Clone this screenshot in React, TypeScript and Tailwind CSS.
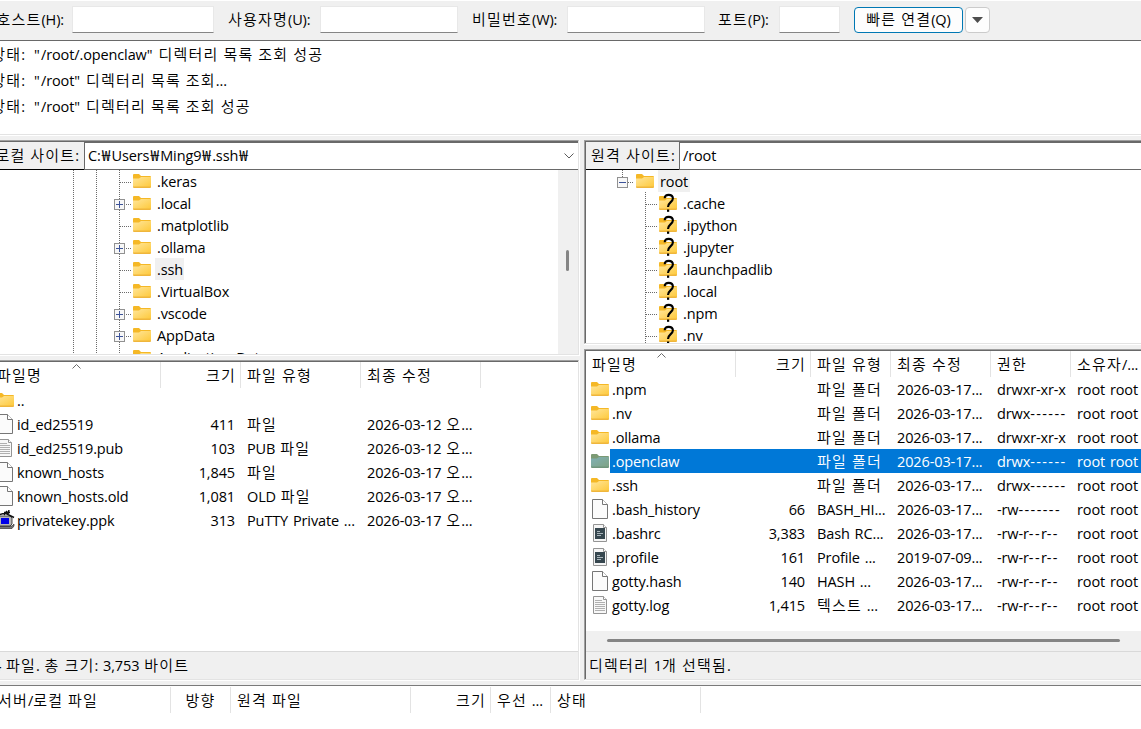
import React from "react";

/* Splits a string so each kind of run can carry its own tracking. */
function T({ s, className = "" }: { s: string; className?: string }) {
  const runs = s.match(/[\uac00-\ud7a3]+|-{2,}|["₩]+|[^\uac00-\ud7a3"₩-]+|-/g) ?? [];
  return (
    <span className={"whitespace-pre [word-spacing:1.2px] " + className}>
      {runs.map((r, i) => {
        let c = "tracking-[-0.12px]";
        if (/[\uac00-\ud7a3]/.test(r)) c = "text-[15px] leading-[0] font-[350] tracking-[1.2px]";
        else if (r.startsWith("--")) c = "tracking-[1.4px]";
        else if (r.startsWith('"')) c = "tracking-[1.2px]";
        else if (r.startsWith("₩")) c = "ml-[1px] text-[15.5px] leading-[0] tracking-[1.2px]";
        return <span key={i} className={c}>{r}</span>;
      })}
    </span>
  );
}

function FolderShape({ x = 0, y = 0, selected = false }: { x?: number; y?: number; selected?: boolean }) {
  const tab = selected ? "#7c9a74" : "#f5b826";
  return (
    <g transform={`translate(${x} ${y})`}>
      <path d="M0 1Q0 0 1 0H6L8 2H17Q18 2 18 3V6H0Z" fill={tab} />
      <path d="M0 4.5H6L8 3H18V13H0Z" fill={selected ? "url(#fs)" : "url(#fy)"} />
      <path d="M0 12.5H18V13Q18 14 17 14H1Q0 14 0 13Z" fill={selected ? "#6f957c" : "#efb63c"} />
    </g>
  );
}

type Kind = "folder" | "sel" | "blank" | "text" | "shell" | "putty";

function FileIcon({ kind }: { kind: Kind }) {
  return (
    <svg width="20" height="20" viewBox="0 0 20 20" className="shrink-0">
      {kind === "folder" && <FolderShape x={1} y={3} />}
      {kind === "sel" && <FolderShape x={1} y={3} selected />}
      {kind === "blank" && (
        <>
          <path d="M2.5 .5H12.5L17.5 5.5V19.5H2.5Z" fill="#fbfbfb" stroke="#767676" />
          <path d="M12.5 .5V5.5H17.5" fill="#fff" stroke="#767676" />
        </>
      )}
      {kind === "text" && (
        <>
          <path d="M3.5 1.5H13.5L16.5 4.5V18.5H3.5Z" fill="#f8f8f8" stroke="#949494" />
          <path d="M13.5 1.5V4.5H16.5" fill="#fff" stroke="#949494" />
          <path d="M5 5.5H12M5 7.5H15M5 9.5H15M5 11.5H15M5 13.5H15M5 15.5H15" stroke="#b0b0b0" />
        </>
      )}
      {kind === "shell" && (
        <>
          <path d="M3.5 1.5H13.5L16.5 4.5V18.5H3.5Z" fill="#f5f5f5" stroke="#949494" />
          <path d="M13.5 1.5V4.5H16.5" fill="#fff" stroke="#949494" />
          <path d="M5 5H15V16H5Z" fill="#36474f" />
          <path d="M7 8.5H10M7 10.5H13M7 12.5H11" stroke="#aab6bc" />
        </>
      )}
      {kind === "putty" && (
        <>
          <path d="M2 16H17L19 14V16L17 18.5H2Z" fill="#777" stroke="#222" strokeWidth=".6" />
          <path d="M3 6H15L17 8V14L15 16H3Z" fill="#b5b5b5" stroke="#222" strokeWidth=".8" />
          <path d="M6 8H14V14H6Z" fill="#0000e8" />
          <path d="M3 5L10 3L19 7.5M9 5L12 1M13 4L14 0M9 2.5H15" fill="none" stroke="#111" strokeWidth="1.5" />
        </>
      )}
    </svg>
  );
}

function Box({ x, plus }: { x: number; plus: boolean }) {
  return (
    <g shapeRendering="crispEdges">
      <rect x={x + 0.5} y="7.5" width="10" height="10" fill="#f7f7f7" stroke="#919191" />
      <path d={`M${x + 2} 12.5H${x + 9}`} stroke="#3c5399" />
      {plus && <path d={`M${x + 5.5} 9V16`} stroke="#3c5399" />}
    </g>
  );
}

function LocalRow({ name, plus, sel }: { name: string; plus?: boolean; sel?: boolean }) {
  return (
    <div className="flex h-[22px] shrink-0 items-center">
      <svg width="155" height="22" className="shrink-0">
        <g stroke="#6b6b6b" strokeDasharray="1 1" shapeRendering="crispEdges">
          <path d="M73.5 0V22M96.5 0V22M119.5 0V22M120 12.5H132" />
        </g>
        {plus && <Box x={114} plus />}
        <FolderShape x={133} y={4} />
      </svg>
      <T s={name} className={"flex h-[22px] items-center pt-[2px] pl-[2px] pr-[1px] " + (sel ? "bg-[#f0f0f0]" : "")} />
    </div>
  );
}

function RemoteRow({ name }: { name: string }) {
  return (
    <div className="flex h-[22px] shrink-0 items-center">
      <svg width="97" height="22" className="shrink-0">
        <path d="M59.5 0V22M60 12.5H72" stroke="#6b6b6b" strokeDasharray="1 1" shapeRendering="crispEdges" />
        <FolderShape x={73} y={4} />
        <path d="M78.7 6.2C78.7 3.6 80.3 2.9 82.7 2.9C85.3 2.9 86.9 4.2 86.9 6.6C86.9 9.9 81.9 10.6 82 15" fill="none" stroke="#000" strokeWidth="2.1" />
        <rect x="81" y="17.5" width="2.2" height="2.3" fill="#000" />
      </svg>
      <T s={name} className="pt-[2px]" />
    </div>
  );
}

function Cell({ w, s, right, head }: { w: string; s: string; right?: boolean; head?: boolean }) {
  return (
    <div
      className={
        "flex h-full shrink-0 items-center overflow-hidden pt-[2px] " + w +
        (right ? (head ? " justify-end pr-[4px]" : " justify-end pr-[6px]") : " pl-[6px]") +
        (head ? " border-r border-[#e3e3e3]" : "")
      }
    >
      <T s={s} />
    </div>
  );
}

function Input({ w }: { w: string }) {
  return <div className={"h-[27px] shrink-0 border border-[#e8e8e8] border-b-[#868686] bg-white " + w} />;
}

const localFiles: [Kind, string, string, string, string][] = [
  ["folder", "..", "", "", ""],
  ["blank", "id_ed25519", "411", "파일", "2026-03-12 오..."],
  ["text", "id_ed25519.pub", "103", "PUB 파일", "2026-03-12 오..."],
  ["blank", "known_hosts", "1,845", "파일", "2026-03-17 오..."],
  ["blank", "known_hosts.old", "1,081", "OLD 파일", "2026-03-17 오..."],
  ["putty", "privatekey.ppk", "313", "PuTTY Private ...", "2026-03-17 오..."],
];

const remoteFiles: [Kind, string, string, string, string, string][] = [
  ["folder", ".npm", "", "파일 폴더", "2026-03-17...", "drwxr-xr-x"],
  ["folder", ".nv", "", "파일 폴더", "2026-03-17...", "drwx------"],
  ["folder", ".ollama", "", "파일 폴더", "2026-03-17...", "drwxr-xr-x"],
  ["sel", ".openclaw", "", "파일 폴더", "2026-03-17...", "drwx------"],
  ["folder", ".ssh", "", "파일 폴더", "2026-03-17...", "drwx------"],
  ["blank", ".bash_history", "66", "BASH_HI...", "2026-03-17...", "-rw-------"],
  ["shell", ".bashrc", "3,383", "Bash RC...", "2026-03-17...", "-rw-r--r--"],
  ["shell", ".profile", "161", "Profile ...", "2019-07-09...", "-rw-r--r--"],
  ["blank", "gotty.hash", "140", "HASH ...", "2026-03-17...", "-rw-r--r--"],
  ["text", "gotty.log", "1,415", "텍스트 ...", "2026-03-17...", "-rw-r--r--"],
];

function SortMark() {
  return (
    <svg width="9" height="5" className="absolute top-[2px]">
      <path d="M.5 4.5L4.5 .5L8.5 4.5" fill="none" stroke="#6b6b6b" />
    </svg>
  );
}

function LocalPane() {
  return (
    <div className="flex w-[580px] shrink-0 flex-col">
      <div className="flex h-[216px] flex-col border-r border-b border-white">
        <div className="flex h-[215px] flex-col border-t border-r border-b border-t-[#a0a0a0] border-r-[#e3e3e3] border-b-[#e3e3e3] bg-white">
          <div className="h-px bg-[#696969]" />
          <div className="flex h-[28px] shrink-0">
            <div className="flex w-[84px] items-center justify-end overflow-hidden border-b border-black bg-[#f0f0f0] pr-[5px]">
              <T s="로컬 사이트:" />
            </div>
            <div className="flex flex-1 items-center border border-t-[1px] border-r-0 border-[#696969] pl-[3px] pr-[4px]">
              <T s="C:₩Users₩Ming9₩.ssh₩" className="flex-1" />
              <svg width="10" height="6">
                <path d="M.5 .5L5 5L9.5 .5" fill="none" stroke="#5c5c5c" />
              </svg>
            </div>
          </div>
          <div className="flex min-h-0 flex-1">
            <div className="min-w-0 flex-1 overflow-hidden">
              <LocalRow name=".keras" />
              <LocalRow name=".local" plus />
              <LocalRow name=".matplotlib" />
              <LocalRow name=".ollama" plus />
              <LocalRow name=".ssh" sel />
              <LocalRow name=".VirtualBox" />
              <LocalRow name=".vscode" plus />
              <LocalRow name="AppData" plus />
              <LocalRow name="Application Data" />
            </div>
            <div className="w-[20px] bg-[#f0f0f0] pl-[8px] pt-[80px]">
              <div className="h-[21px] w-[3px] rounded-full bg-[#858585]" />
            </div>
          </div>
        </div>
      </div>
      <div className="mt-[4px] flex h-[321px] flex-col border-r border-b border-white">
        <div className="flex h-[320px] flex-col border-t border-r border-b border-t-[#a0a0a0] border-r-[#e3e3e3] border-b-[#e3e3e3] bg-white">
          <div className="h-px shrink-0 bg-[#696969]" />
          <div className="relative flex h-[26px] shrink-0">
            <div className="flex w-[161px] items-center border-r border-[#e3e3e3] pt-[2px]">
              <T s="파일명" className="-ml-[3px]" />
            </div>
            <div className="absolute left-[72px] top-0"><SortMark /></div>
            <Cell head w="w-[80px]" s="크기" right />
            <Cell head w="w-[120px]" s="파일 유형" />
            <Cell head w="w-[120px]" s="최종 수정" />
          </div>
          <div className="flex-1">
            {localFiles.map((f) => (
              <div key={f[1]} className="flex h-[24px] items-center">
                <div className="flex w-[161px] items-center">
                  <div className="-ml-[5px] mr-[2px] flex"><FileIcon kind={f[0]} /></div>
                  <T s={f[1]} className="pt-[2px]" />
                </div>
                <Cell w="w-[80px]" s={f[2]} right />
                <Cell w="w-[120px]" s={f[3]} />
                <Cell w="w-[120px]" s={f[4]} />
              </div>
            ))}
          </div>
          <div className="flex h-[28px] items-center overflow-hidden border-t border-[#d9d9d9] bg-[#f0f0f0]">
            <T s="4 파일. 총 크기: 3,753 바이트" className="-ml-[7px]" />
          </div>
        </div>
      </div>
    </div>
  );
}

function RemotePane() {
  return (
    <div className="flex w-[557px] shrink-0 flex-col">
      <div className="flex h-[205px] flex-col border-b border-white">
        <div className="flex h-[204px] flex-col border-t border-l border-b border-t-[#a0a0a0] border-l-[#a0a0a0] border-b-[#e3e3e3]">
          <div className="flex min-h-0 flex-1 flex-col border-t border-l border-[#696969] bg-white">
            <div className="flex h-[28px] shrink-0">
              <div className="flex w-[93px] items-center border-b border-black bg-[#f0f0f0] pl-[5px]">
                <T s="원격 사이트:" />
              </div>
              <div className="flex flex-1 items-center border border-r-0 border-[#696969] pl-[3px]">
                <T s="/root" />
              </div>
            </div>
            <div className="min-h-0 flex-1 overflow-hidden">
              <div className="flex h-[22px] items-center">
                <svg width="72" height="22" className="shrink-0">
                  <path d="M36.5 0V7M42 12.5H48" stroke="#6b6b6b" strokeDasharray="1 1" shapeRendering="crispEdges" />
                  <Box x={31} plus={false} />
                  <FolderShape x={50} y={4} />
                </svg>
                <T s="root" className="flex h-[22px] w-[32px] items-center bg-[#f0f0f0] pt-[2px] pl-[2px]" />
              </div>
              {[".cache", ".ipython", ".jupyter", ".launchpadlib", ".local", ".npm", ".nv"].map((n) => (
                <RemoteRow key={n} name={n} />
              ))}
            </div>
          </div>
        </div>
      </div>
      <div className="mt-[4px] flex h-[332px] flex-col border-b border-white">
        <div className="flex h-[331px] flex-col border-t border-l border-b border-t-[#a0a0a0] border-l-[#a0a0a0] border-b-[#e3e3e3]">
          <div className="flex min-h-0 flex-1 flex-col border-t border-l border-[#696969] bg-white">
            <div className="relative flex h-[26px] shrink-0 overflow-hidden">
              <Cell head w="w-[150px]" s="파일명" />
              <div className="absolute left-[71px] top-0"><SortMark /></div>
              <Cell head w="w-[75px]" s="크기" right />
              <Cell head w="w-[80px]" s="파일 유형" />
              <Cell head w="w-[100px]" s="최종 수정" />
              <Cell head w="w-[80px]" s="권한" />
              <Cell w="w-[80px]" s="소유자/..." />
            </div>
            <div className="flex-1 overflow-hidden">
              {remoteFiles.map((f) => (
                <div key={f[1]} className="flex h-[24px] items-center">
                  <div className="flex w-[24px] shrink-0 pl-[4px]"><FileIcon kind={f[0]} /></div>
                  <div className={"flex h-full flex-1 items-center overflow-hidden " + (f[0] === "sel" ? "bg-[#0078d7] text-white" : "")}>
                    <div className="flex w-[126px] shrink-0 pt-[2px] pl-[2px]"><T s={f[1]} /></div>
                    <Cell w="w-[75px]" s={f[2]} right />
                    <Cell w="w-[80px]" s={f[3]} />
                    <Cell w="w-[100px]" s={f[4]} />
                    <Cell w="w-[80px]" s={f[5]} />
                    <Cell w="w-[80px]" s="root root" />
                  </div>
                </div>
              ))}
            </div>
            <div className="flex h-[20px] shrink-0 items-center bg-[#f0f0f0] pl-[21px]">
              <div className="-mt-[2px] h-[3px] w-[513px] rounded-full bg-[#858585]" />
            </div>
            <div className="flex h-[28px] shrink-0 items-center border-t border-[#d9d9d9] bg-[#f0f0f0] pl-[3px]">
              <T s="디렉터리 1개 선택됨." />
            </div>
          </div>
        </div>
      </div>
    </div>
  );
}

export default function App() {
  return (
    <div className="flex h-[729px] w-[1141px] flex-col overflow-hidden bg-[#f0f0f0] font-['Open_Sans','Noto_Sans_CJK_KR',sans-serif] text-[14.5px] leading-[20px] text-black">
      <svg width="0" height="0" className="absolute">
        <defs>
          <linearGradient id="fy" x1="0" y1="0" x2="1" y2="1">
            <stop offset="0" stopColor="#ffe69b" />
            <stop offset="1" stopColor="#fec93b" />
          </linearGradient>
          <linearGradient id="fs" x1="0" y1="0" x2="1" y2="1">
            <stop offset="0" stopColor="#7fb0b5" />
            <stop offset="1" stopColor="#7fa384" />
          </linearGradient>
        </defs>
      </svg>
      <div className="flex h-[41px] shrink-0 items-center border-t border-b border-t-white border-b-[#696969] pb-[2px]">
        <div className="flex w-[72px] shrink-0 justify-end overflow-hidden pr-[8px]"><T s="호스트(H):" /></div>
        <Input w="w-[142px]" />
        <div className="w-[106px] shrink-0 pl-[14px]"><T s="사용자명(U):" /></div>
        <Input w="w-[138px]" />
        <div className="w-[109px] shrink-0 pl-[14px]"><T s="비밀번호(W):" /></div>
        <Input w="w-[138px]" />
        <div className="w-[74px] shrink-0 pl-[13px]"><T s="포트(P):" /></div>
        <Input w="w-[61px]" />
        <div className="ml-[14px] flex h-[26px] w-[109px] items-center justify-center rounded-[4px] border border-[#0078b4] bg-[#fdfdfd]">
          <T s="빠른 연결(Q)" />
        </div>
        <div className="ml-[2px] flex h-[26px] w-[25px] items-center justify-center rounded-[4px] border border-[#cbcbcb] bg-[#fdfdfd]">
          <svg width="11" height="6"><path d="M0 0H11L5.5 6Z" fill="#4d4d4d" /></svg>
        </div>
      </div>
      <div className="h-[95px] shrink-0 border-b border-white">
        <div className="h-[94px] overflow-hidden border-b border-[#e3e3e3] bg-white pt-[1px]">
          {['"/root/.openclaw" 디렉터리 목록 조회 성공', '"/root" 디렉터리 목록 조회...', '"/root" 디렉터리 목록 조회 성공'].map((s) => (
            <div key={s} className="flex h-[26px] items-center">
              <div className="flex w-[34px] justify-end overflow-hidden pr-[9px]"><T s="상태:" /></div>
              <T s={s} />
            </div>
          ))}
        </div>
      </div>
      <div className="mt-[4px] flex h-[541px] shrink-0 gap-[4px]">
        <LocalPane />
        <RemotePane />
      </div>
      <div className="mt-[4px] flex flex-1 flex-col border-t border-[#7a7a7a] bg-white">
        <div className="flex h-[27px] border-t border-white">
          <div className="flex w-[171px] items-center overflow-hidden border-r border-[#e3e3e3] pt-[2px]"><T s="서버/로컬 파일" className="-ml-[2px]" /></div>
          <div className="flex w-[60px] items-center justify-center border-r border-[#e3e3e3] pt-[2px]"><T s="방향" /></div>
          <Cell head w="w-[180px]" s="원격 파일" />
          <Cell head w="w-[80px]" s="크기" right />
          <Cell head w="w-[60px]" s="우선 ..." />
          <Cell head w="w-[150px]" s="상태" />
        </div>
      </div>
    </div>
  );
}
